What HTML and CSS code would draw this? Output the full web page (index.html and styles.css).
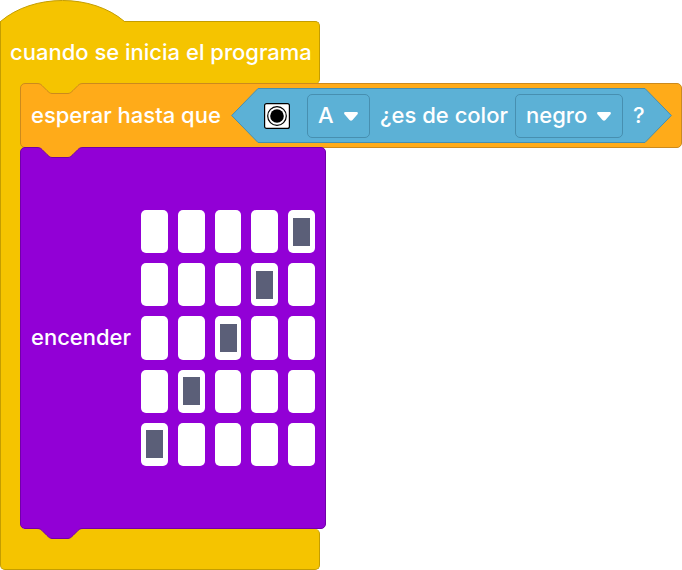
FILE: index.html
```
<!DOCTYPE html>
<html lang="es">
<head>
<meta charset="utf-8">
<meta name="viewport" content="width=device-width, initial-scale=1">
<title>Programa de bloques</title>
<link rel="stylesheet" href="styles.css">
</head>
<body>
<main class="program">
  <svg class="hat" viewBox="0 0 125 22" aria-hidden="true"><path d="M.5 22V21.500C33-6.500 92-6.500 124.500 21.500V22Z"/><path class="line" d="M.5 22V21.500C33-6.500 92-6.500 124.500 21.500"/></svg>
  <header class="head">cuando se inicia el programa</header>
  <div class="body">
    <section class="block wait">
      <svg class="notch notch-start" viewBox="0 0 46 11" aria-hidden="true"><path d="M0 0V.5C3 .5 4 1.500 5 2.500L10 7.500C11.500 9 13 10.500 15 10.500H31C33 10.500 34.500 9 36 7.500L41 2.500C42 1.500 43 .5 46 .5V0Z"/><path class="line" d="M0 .5C3 .5 4 1.500 5 2.500L10 7.500C11.500 9 13 10.500 15 10.500H31C33 10.500 34.500 9 36 7.500L41 2.500C42 1.500 43 .5 46 .5"/></svg>
      <span class="label wait-label">esperar hasta que</span>
      <div class="condition">
        <svg class="cap" viewBox="0 0 27 55" aria-hidden="true"><path d="M27 .5L.7 27.500L27 54.500Z"/><path class="line" d="M27 .5L.7 27.500L27 54.500"/></svg>
        <div class="fields">
          <svg class="sensor" viewBox="0 0 26 26" aria-hidden="true"><rect x=".6" y=".6" width="24.800" height="24.800" rx="2" fill="#fff" stroke="#000" stroke-width="1.200"/><circle cx="13" cy="13" r="9.300" fill="#fff" stroke="#000" stroke-width="1.200"/><circle cx="13" cy="13" r="6.800"/></svg>
          <div class="picker port">
            <select aria-label="Puerto"><option>A</option></select>
            <svg class="arrow" viewBox="0 0 14 9" aria-hidden="true"><path d="M1.500 0H12.500C14 0 14.300 1.500 13.300 2.600L8.500 8C7.500 9 6.500 9 5.500 8L.7 2.600C-.3 1.500 0 0 1.500 0Z"/></svg>
          </div>
          <span class="label question">¿es de color</span>
          <div class="picker color">
            <select aria-label="Color"><option>negro</option></select>
            <svg class="arrow" viewBox="0 0 14 9" aria-hidden="true"><path d="M1.500 0H12.500C14 0 14.300 1.500 13.300 2.600L8.500 8C7.500 9 6.500 9 5.500 8L.7 2.600C-.3 1.500 0 0 1.500 0Z"/></svg>
          </div>
          <span class="label">?</span>
        </div>
        <svg class="cap" viewBox="0 0 27 55" aria-hidden="true"><path d="M0 .5L26.300 27.500L0 54.500Z"/><path class="line" d="M0 .5L26.300 27.500L0 54.500"/></svg>
      </div>
    </section>
    <section class="block light">
      <svg class="notch notch-wait" viewBox="0 0 46 11" aria-hidden="true"><path d="M0 0V.5C3 .5 4 1.500 5 2.500L10 7.500C11.500 9 13 10.500 15 10.500H31C33 10.500 34.500 9 36 7.500L41 2.500C42 1.500 43 .5 46 .5V0Z"/><path class="line" d="M0 .5C3 .5 4 1.500 5 2.500L10 7.500C11.500 9 13 10.500 15 10.500H31C33 10.500 34.500 9 36 7.500L41 2.500C42 1.500 43 .5 46 .5"/></svg>
      <span class="label light-label">encender</span>
      <div class="matrix" role="group" aria-label="Matriz de luces">
        <input type="checkbox" aria-label="Fila 1, columna 1"><input type="checkbox" aria-label="Fila 1, columna 2"><input type="checkbox" aria-label="Fila 1, columna 3"><input type="checkbox" aria-label="Fila 1, columna 4"><input type="checkbox" aria-label="Fila 1, columna 5" checked>
        <input type="checkbox" aria-label="Fila 2, columna 1"><input type="checkbox" aria-label="Fila 2, columna 2"><input type="checkbox" aria-label="Fila 2, columna 3"><input type="checkbox" aria-label="Fila 2, columna 4" checked><input type="checkbox" aria-label="Fila 2, columna 5">
        <input type="checkbox" aria-label="Fila 3, columna 1"><input type="checkbox" aria-label="Fila 3, columna 2"><input type="checkbox" aria-label="Fila 3, columna 3" checked><input type="checkbox" aria-label="Fila 3, columna 4"><input type="checkbox" aria-label="Fila 3, columna 5">
        <input type="checkbox" aria-label="Fila 4, columna 1"><input type="checkbox" aria-label="Fila 4, columna 2" checked><input type="checkbox" aria-label="Fila 4, columna 3"><input type="checkbox" aria-label="Fila 4, columna 4"><input type="checkbox" aria-label="Fila 4, columna 5">
        <input type="checkbox" aria-label="Fila 5, columna 1" checked><input type="checkbox" aria-label="Fila 5, columna 2"><input type="checkbox" aria-label="Fila 5, columna 3"><input type="checkbox" aria-label="Fila 5, columna 4"><input type="checkbox" aria-label="Fila 5, columna 5">
      </div>
    </section>
  </div>
  <footer class="foot">
    <svg class="notch notch-light" viewBox="0 0 46 11" aria-hidden="true"><path d="M0 0V.5C3 .5 4 1.500 5 2.500L10 7.500C11.500 9 13 10.500 15 10.500H31C33 10.500 34.500 9 36 7.500L41 2.500C42 1.500 43 .5 46 .5V0Z"/><path class="line" d="M0 .5C3 .5 4 1.500 5 2.500L10 7.500C11.500 9 13 10.500 15 10.500H31C33 10.500 34.500 9 36 7.500L41 2.500C42 1.500 43 .5 46 .5"/></svg>
  </footer>
</main>
</body>
</html>
```
FILE: styles.css
```
* {
  box-sizing: border-box;
}

body {
  --yellow: #f5c400;
  --yellow-line: #c49d00;
  --orange: #ffab19;
  --orange-line: #cc8a1d;
  --purple: #9200d6;
  --purple-line: #7100a8;
  --blue: #5cb1d6;
  --blue-line: #478fb0;
  margin: 0;
  background: #fff;
  color: #fff;
  font: 500 22px/26px Inter, Roboto, sans-serif;
}

svg {
  display: block;
  flex: none;
}

svg .line {
  fill: none;
}

.hat {
  position: relative;
  z-index: 1;
  width: 125px;
  height: 22px;
  margin-bottom: -1px;
  fill: var(--yellow);
}

.hat .line {
  stroke: var(--yellow-line);
}

.head,
.foot {
  width: fit-content;
  min-width: 320px;
  background: var(--yellow);
  border: 1px solid var(--yellow-line);
}

.head {
  padding: 17px 7px 19px 9px;
  border-bottom: 0;
  border-radius: 0 5px 5px 0;
  white-space: nowrap;
}

.body {
  margin-top: -1px;
  padding-left: 19px;
  background: linear-gradient(var(--yellow), var(--yellow)) 0 0 / 22px 100% no-repeat;
  border-left: 1px solid var(--yellow-line);
}

.block {
  position: relative;
  display: flex;
  align-items: center;
  gap: 10px;
  padding: 0 10px;
  border: 1px solid;
  border-radius: 5px;
}

.wait {
  min-height: 65px;
  background: var(--orange);
  border-color: var(--orange-line);
}

.light {
  width: fit-content;
  min-height: 382px;
  margin-top: -1px;
  background: var(--purple);
  border-color: var(--purple-line);
}

.label {
  padding-bottom: 2px;
  white-space: nowrap;
}

.wait-label {
  min-width: 190px;
}

.light-label {
  min-width: 100px;
}

.notch {
  position: absolute;
  top: -1px;
  left: 16px;
  width: 46px;
  height: 11px;
}

.notch-start {
  fill: var(--yellow);
}

.notch-start .line {
  stroke: var(--orange-line);
}

.notch-wait {
  fill: var(--orange);
}

.notch-light {
  left: 36px;
  fill: var(--purple);
}

.notch-wait .line,
.notch-light .line {
  stroke: var(--purple-line);
}

.condition {
  display: flex;
  flex: 1;
}

.cap {
  width: 27px;
  height: 55px;
  fill: var(--blue);
}

.cap .line {
  stroke: var(--blue-line);
}

.fields {
  display: flex;
  flex: 1;
  align-items: center;
  gap: 10px;
  padding-left: 6px;
  background: var(--blue);
  border: solid var(--blue-line);
  border-width: 1px 0;
}

.sensor {
  width: 26px;
  height: 26px;
  margin-right: 7px;
}

.picker {
  position: relative;
}

.picker select {
  appearance: none;
  display: block;
  width: 100%;
  height: 44px;
  margin: 0;
  padding: 0 10px 2px;
  background: transparent;
  border: 1px solid var(--blue-line);
  border-radius: 5px;
  color: inherit;
  font: inherit;
}

.port {
  width: 63px;
}

.question {
  width: 125px;
}

.color {
  width: 108px;
}

.arrow {
  position: absolute;
  top: 18px;
  right: 12px;
  width: 14px;
  height: 9px;
  fill: #fff;
  pointer-events: none;
}

.matrix {
  display: grid;
  grid-template: repeat(5, 1fr) / repeat(5, 1fr);
  gap: 10px;
  width: 174px;
  height: 256px;
}

.matrix input {
  appearance: none;
  display: grid;
  place-items: center;
  margin: 0;
  background: #fff;
  border-radius: 5px;
}

.matrix input:checked::before {
  content: "";
  width: 17px;
  height: 28px;
  background: #5b5f78;
}

.foot {
  position: relative;
  min-height: 41px;
  border-top: 0;
  border-radius: 0 5px 5px 5px;
}
```
